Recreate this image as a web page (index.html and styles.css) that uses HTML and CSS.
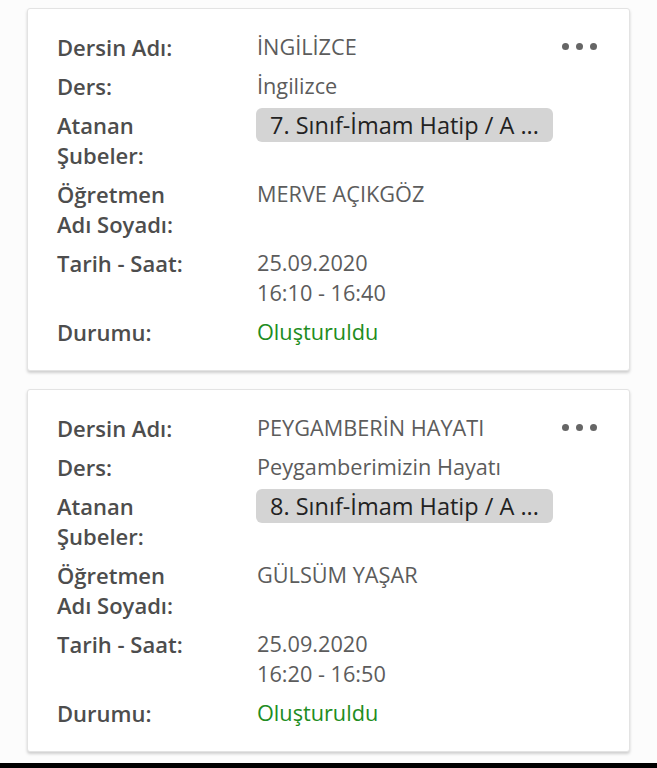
FILE: index.html
```html
<!DOCTYPE html>
<html lang="tr">
<head>
<meta charset="utf-8">
<link rel="stylesheet" href="styles.css">
</head>
<body>
<div class="page">
  <div class="card">
    <button class="more" aria-label="menu"><span></span><span></span><span></span></button>
    <div class="grid">
      <div class="label">Dersin Adı:</div><div class="value">İNGİLİZCE</div>
      <div class="label">Ders:</div><div class="value">İngilizce</div>
      <div class="label">Atanan Şubeler:</div><div class="value"><span class="chip">7. Sınıf-İmam Hatip / A ...</span></div>
      <div class="label">Öğretmen Adı Soyadı:</div><div class="value">MERVE AÇIKGÖZ</div>
      <div class="label">Tarih - Saat:</div><div class="value">25.09.2020<br>16:10 - 16:40</div>
      <div class="label">Durumu:</div><div class="value status">Oluşturuldu</div>
    </div>
  </div>
  <div class="card">
    <button class="more" aria-label="menu"><span></span><span></span><span></span></button>
    <div class="grid">
      <div class="label">Dersin Adı:</div><div class="value">PEYGAMBERİN HAYATI</div>
      <div class="label">Ders:</div><div class="value">Peygamberimizin Hayatı</div>
      <div class="label">Atanan Şubeler:</div><div class="value"><span class="chip">8. Sınıf-İmam Hatip / A ...</span></div>
      <div class="label">Öğretmen Adı Soyadı:</div><div class="value">GÜLSÜM YAŞAR</div>
      <div class="label">Tarih - Saat:</div><div class="value">25.09.2020<br>16:20 - 16:50</div>
      <div class="label">Durumu:</div><div class="value status">Oluşturuldu</div>
    </div>
  </div>
</div>
<div class="bottom-bar"></div>
</body>
</html>
```
FILE: styles.css
```css
* { box-sizing: border-box; }
html, body { margin: 0; padding: 0; }
body {
  width: 657px;
  height: 768px;
  overflow: hidden;
  background: #fcfcfc;
  font-family: "Open Sans", "Liberation Sans", sans-serif;
  display: flex;
  flex-direction: column;
}
.page {
  flex: 1;
  padding: 8px 27px 0 27px;
  display: flex;
  flex-direction: column;
  gap: 18px;
}
.card {
  position: relative;
  background: #fff;
  border: 1px solid #e3e3e3;
  border-radius: 3px;
  box-shadow: 0 2px 3px rgba(0,0,0,0.18);
  padding: 23px 30px 23px 29px;
}
.grid {
  display: grid;
  grid-template-columns: 140px 1fr;
  column-gap: 60px;
  row-gap: 9px;
  font-size: 21.7px;
  line-height: 30px;
}
.label {
  font-size: 22px;
  font-weight: 600;
  color: #4d4d4d;
}
.value {
  color: #5c5c5c;
}
.status { color: #218c21; }
.chip {
  display: inline-block;
  background: #d4d4d4;
  color: #222;
  border-radius: 6px;
  padding: 2px 14px;
  font-size: 23.5px;
  line-height: 30px;
  margin-top: -2px;
  margin-left: -1px;
}
.more {
  position: absolute;
  top: 34px;
  right: 32px;
  border: 0;
  background: none;
  padding: 0;
  display: flex;
  gap: 7px;
}
.more span {
  width: 7px;
  height: 7px;
  border-radius: 50%;
  background: #666;
}
.bottom-bar {
  height: 5px;
  background: #000;
  flex: none;
}
```
